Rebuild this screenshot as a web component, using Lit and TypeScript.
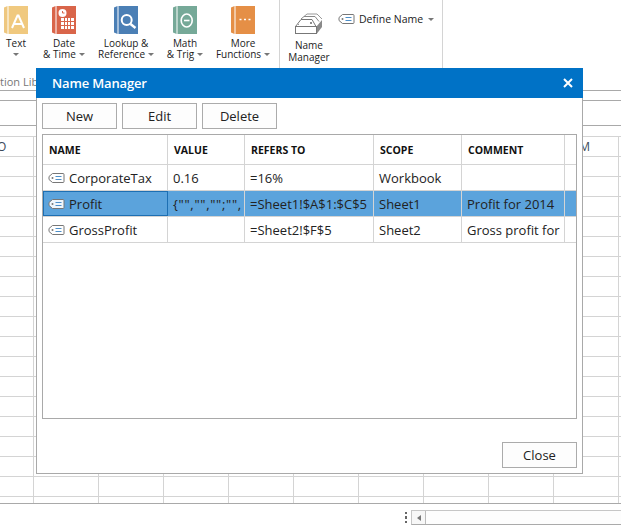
import { LitElement, html, css, svg } from "lit";
import { customElement } from "lit/decorators.js";

const tag = () => svg`<svg class="tag" viewBox="0 0 17 12" width="17" height="12"><path d="M4.5 1.5H15a1 1 0 0 1 1 1v7a1 1 0 0 1-1 1H4.5L1 7.5v-3z" fill="#fff" fill-opacity="0.9" stroke="#777"/><path d="M7.5 4.5h6M7.5 7.5h6" stroke="#4d8fc9" fill="none"/><circle cx="4.500" cy="6" r="1" fill="#777"/></svg>`;

const book = (body: string, spine: string, glyph: unknown) => svg`<svg class="book" width="24" height="28" viewBox="0 0 24 28"><path d="M0 1.500L3.500 0V28L0 26.500z" fill="${spine}"/><rect x="4.500" width="19.500" height="28" fill="${body}"/>${glyph}</svg>`;

const rows = [
  { n: "CorporateTax", v: "0.16", r: "=16%", s: "Workbook", c: "", sel: false, q: false },
  { n: "Profit", v: `{"","","";"",`, r: "=Sheet1!$A$1:$C$5", s: "Sheet1", c: "Profit for 2014", sel: true, q: true },
  { n: "GrossProfit", v: "", r: "=Sheet2!$F$5", s: "Sheet2", c: "Gross profit for", sel: false, q: false },
];

@customElement("app-root")
export class AppRoot extends LitElement {
  static styles = css`
    :host { display: block; position: relative; width: 621px; height: 531px; overflow: hidden; background: #fff;
      font-family: "Open Sans", "Noto Sans", sans-serif; color: #222; }
    .ribbon { display: flex; height: 68px; font-size: 10px; line-height: 11px; }
    .rb { display: flex; flex-direction: column; align-items: center; text-align: center; flex: none; white-space: nowrap; }
    .book { display: block; margin-top: 6px; margin-bottom: 4px; flex: none; }
    .b1 { width: 32px; }
    .b2 { width: 48px; margin-left: 8px; }
    .b3 { width: 64px; margin-left: 6px; }
    .b4 { width: 50px; margin-left: 2px; }
    .b5 { width: 60px; margin-left: 3px; }
    .spacer { width: 6px; flex: none; }
    .caret { display: inline-block; width: 0; height: 0; border: 3px solid transparent; border-top: 3px solid #777; border-bottom: 0; margin-left: 3px; vertical-align: 2px; }
    .caret.solo { margin-left: 0; }
    .caret.wide { margin-left: 1px; }
    .sep { width: 1px; height: 68px; background: #d4d4d4; flex: none; }
    .nm { width: 58px; line-height: 12px; }
    .nm svg { display: block; margin-top: 13px; margin-bottom: 5px; flex: none; }
    .define { display: flex; align-items: center; gap: 4px; height: 38px; width: 104px; white-space: nowrap; flex: none; font-size: 10.5px; }
    .define svg { display: block; flex: none; }
    .band { height: 22px; border-bottom: 1px solid #a9a9a9; box-sizing: content-box; font-size: 11px; line-height: 28px; color: #777; white-space: nowrap; overflow: hidden; }
    .fx { margin-top: 9px; height: 24px; border-top: 1px solid #a9a9a9; border-bottom: 1px solid #a9a9a9; }
    .sheet { margin-top: 10px; height: 367px; border-bottom: 1px solid #a9a9a9; display: flex; justify-content: space-between; font-size: 12px; line-height: 22px; color: #3a4a5a;
      background-image: linear-gradient(to right, #d4d4d4 1px, transparent 1px), linear-gradient(to bottom, #d4d4d4 1px, transparent 1px);
      background-size: 65px 100%, 100% 20px; background-position: 33px 0, 0 0; }
    .sheet span { display: block; height: 20px; }
    .o { margin-left: -3px; }
    .m { margin-right: 31px; }
    .dialog { position: absolute; left: 36px; top: 68px; width: 547px; height: 406px; box-sizing: border-box; background: #fff;
      border: 1px solid #a9a9a9; border-top: 0; display: flex; flex-direction: column; }
    .title { height: 30px; margin: 0 -1px; background: #0072c6; color: #fff; font-size: 13px; font-weight: 600; letter-spacing: -0.15px; display: flex; align-items: center; justify-content: space-between; padding: 0 9px 0 16px; flex: none; }
    .title svg { display: block; }
    .tools { display: flex; gap: 5px; padding: 5px 5px 0; flex: none; }
    button { font: inherit; font-size: 13px; color: #222; background: #fdfdfd; border: 1px solid #ababab; height: 26px; width: 75px; padding: 0; box-sizing: border-box; flex: none; }
    .grid { margin: 5px 5px 0; height: 285px; border: 1px solid #a9a9a9; box-sizing: border-box; flex: none; overflow: hidden; }
    .row { display: grid; grid-template-columns: 125px 77px 129px 88px 103px 13px; height: 26px; font-size: 13px; line-height: 27px; box-sizing: border-box; border-bottom: 1px solid #d4d4d4; white-space: nowrap; }
    .row > div { border-right: 1px solid #d4d4d4; padding-left: 5px; overflow: hidden; box-sizing: border-box; color: #222; }
    .row > div:last-child { border-right: 0; }
    .head { height: 30px; line-height: 31px; font-size: 10.5px; font-weight: 700; }
    .head > div { padding-left: 6px; color: #111; }
    .row > .name { display: flex; align-items: center; gap: 4px; }
    .name span { line-height: 25px; padding-top: 2px; }
    .name svg { flex: none; }
    .row > .quotes { letter-spacing: 0.7px; }
    .sel { background: #5ba3dc; }
    .sel .name { outline: 1px solid #1d6fb3; outline-offset: -1px; }
    .foot { display: flex; justify-content: flex-end; padding: 23px 5px 0; }
    .status { height: 26px; display: flex; align-items: flex-start; padding: 6px 0 0 405px; gap: 4px; }
    .dots { width: 2px; height: 11px; margin-top: 2px; flex: none;
      background: repeating-linear-gradient(to bottom, #666 0 2px, transparent 2px 4.5px); }
    .scroll { width: 215px; height: 15px; flex: none; box-sizing: border-box; border: 1px solid #c6c6c6; border-bottom: 1px solid #aaa; background: #fdfdfd; }
    .arrow { width: 14px; height: 13px; border-right: 1px solid #bbb; box-sizing: border-box; display: flex; align-items: center; justify-content: center; background: #f7f7f7; }
    .arrow i { display: block; width: 0; height: 0; border: 3px solid transparent; border-right: 4px solid #777; border-left: 0; }
  `;

  render() {
    return html`
      <div class="ribbon">
        <div class="rb b1">
          ${book("#f0c97f", "#eec77f", svg`<path d="M8 22L13.500 9.500h1L20 22M10 18h8" stroke="#fff" stroke-width="2" fill="none"/>`)}
          <span>Text</span><span><i class="caret solo"></i></span>
        </div>
        <div class="rb b2">
          ${book("#d9654a", "#d9654a", svg`<circle cx="10.500" cy="7" r="4" fill="#fff"/><path d="M10.500 5v2h2" stroke="#d9654a" fill="none"/><path d="M9 12h13v11H9z" fill="#fff"/><path d="M12.500 12v11M15.500 12v11M18.500 12v11M9 15.500h13M9 19.500h13" stroke="#d9654a"/>`)}
          <span>Date</span><span>&amp; Time<i class="caret"></i></span>
        </div>
        <div class="rb b3">
          ${book("#4b7fb5", "#4b7fb5", svg`<circle cx="12.700" cy="14" r="5" fill="none" stroke="#fff" stroke-width="2"/><path d="M16.500 18l5 4" stroke="#fff" stroke-width="2.500"/>`)}
          <span>Lookup &amp;</span><span>Reference<i class="caret"></i></span>
        </div>
        <div class="rb b4">
          ${book("#76a998", "#76a998", svg`<ellipse cx="13.700" cy="14.500" rx="5.500" ry="6.500" fill="none" stroke="#fff" stroke-width="1.600"/><path d="M11 14.500h5.500" stroke="#fff" stroke-width="1.600"/>`)}
          <span>Math</span><span>&amp; Trig<i class="caret"></i></span>
        </div>
        <div class="rb b5">
          ${book("#e58f46", "#e58f46", svg`<path d="M8.500 13.500h2M13 13.500h2M17.500 13.500h2" stroke="#fff" stroke-width="1.500"/>`)}
          <span>More</span><span>Functions<i class="caret"></i></span>
        </div>
        <div class="spacer"></div>
        <div class="sep"></div>
        <div class="rb nm">
          <svg width="28" height="21" viewBox="0 0 28 21"><path d="M9 3.500L12 1H22L27 6" fill="none" stroke="#999"/><path d="M6 6L9 3.500H20L24 8.500" fill="none" stroke="#888"/><path d="M21.500 13.500L27 7V14L22 20.500z" fill="#8a8a8a"/><path d="M.5 13.500L6 6.500H17L21 13.500" fill="#fff" stroke="#777"/><rect x=".5" y="13.500" width="21" height="7" fill="#fff" stroke="#777"/><circle cx="16" cy="10" r="1" fill="#666"/><path d="M3 11.500h1" stroke="#999"/></svg>
          <span>Name</span><span>Manager</span>
        </div>
        <div class="define">${tag()}<span>Define Name</span><i class="caret wide"></i></div>
        <div class="sep"></div>
      </div>
      <div class="band">tion Lib</div>
      <div class="fx"></div>
      <div class="sheet"><span class="o">O</span><span class="m">M</span></div>
      <div class="status"><div class="dots"></div><div class="scroll"><div class="arrow"><i></i></div></div></div>
      <div class="dialog">
        <div class="title"><span>Name Manager</span>
          <svg width="12" height="12" viewBox="0 0 12 12"><path d="M2 2l8 8M10 2l-8 8" stroke="#fff" stroke-width="2"/></svg>
        </div>
        <div class="tools"><button>New</button><button>Edit</button><button>Delete</button></div>
        <div class="grid">
          <div class="row head"><div>NAME</div><div>VALUE</div><div>REFERS TO</div><div>SCOPE</div><div>COMMENT</div><div></div></div>
          ${rows.map((r) => html`<div class="row ${r.sel ? "sel" : ""}">
            <div class="name">${tag()}<span>${r.n}</span></div><div class="${r.q ? "quotes" : ""}">${r.v}</div><div>${r.r}</div><div>${r.s}</div><div>${r.c}</div><div></div>
          </div>`)}
        </div>
        <div class="foot"><button>Close</button></div>
      </div>
    `;
  }
}
